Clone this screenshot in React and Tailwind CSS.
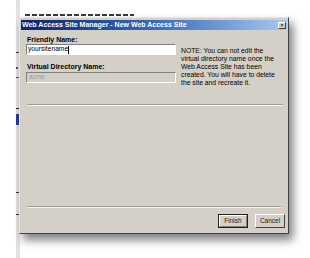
import React from 'react';

const sans = { fontFamily: '"Liberation Sans", Arial, sans-serif' };

function StripMarks() {
  // bits of the page behind the dialog, peeking out on the left
  return (
    <div className="flex flex-col w-[4px] h-full bg-[#e2e2e2]">
      <div className="h-[52px]" />
      <div className="h-[1px] w-[3px] bg-[#333]" />
      <div className="h-[14px]" />
      <div className="h-[2px] w-[2px] bg-[#555]" />
      <div className="h-[8px]" />
      <div className="h-[1px] w-[3px] bg-[#555]" />
      <div className="h-[30px]" />
      <div className="h-[1px] w-[3px] bg-[#222]" />
      <div className="h-[5px]" />
      <div className="h-[11px] w-[3px] bg-[#2a3c9c]" />
      <div className="h-[67px]" />
      <div className="h-[1px] w-[3px] bg-[#333]" />
      <div className="h-[21px]" />
      <div className="h-[1px] w-[3px] bg-[#333]" />
    </div>
  );
}

export default function App() {
  return (
    <div className="relative w-[310px] h-[258px] bg-white overflow-hidden" style={sans}>
      {/* page behind the dialog: bottom edge of a heading that the dialog hides */}
      <div className="absolute left-[25px] top-[14px] h-[2px] w-[109px] bg-[repeating-linear-gradient(90deg,#3a3a3a_0px,#3a3a3a_5px,transparent_5px,transparent_7px)]" />
      <div className="absolute left-[16px] top-0 h-[258px]">
        <StripMarks />
      </div>

      {/* dialog window */}
      <div className="absolute left-[19px] top-[17px] w-[270px] h-[217px] flex flex-col bg-[#d4d0c8] border border-t-[#e8e6e1] border-l-[#e8e6e1] border-r-[#404040] border-b-[#404040] pt-[2px] px-[1px] shadow-[4px_6px_9px_rgba(0,0,0,0.5)]">
        {/* title bar */}
        <div className="h-[10px] flex items-center justify-between pl-[1px] pr-[1px] bg-gradient-to-r from-[#0a246a] via-[#3a6ab8] to-[#a6caf0]">
          <span className="text-[7px] leading-[10px] font-bold text-white whitespace-nowrap">
            Web Access Site Manager - New Web Access Site
          </span>
          <span className="w-[8px] h-[7px] flex items-center justify-center bg-[#d4d0c8] border border-t-white border-l-white border-r-[#404040] border-b-[#404040] text-[6px] leading-none text-black">
            ×
          </span>
        </div>

        {/* body */}
        <div className="flex flex-col flex-1 px-[5px]">
          <div className="flex gap-[5px] pt-[5px]">
            <div className="flex flex-col w-[150px]">
              <div className="pl-[1px] text-[7px] leading-[9px] font-bold text-black">Friendly Name:</div>
              <div className="h-[11px] flex items-center bg-white border border-t-[#808080] border-l-[#808080] border-r-white border-b-white pl-[1px]">
                <span className="text-[6.7px] leading-none text-black">yoursitename</span>
                <span className="w-[1px] h-[8px] bg-black" />
              </div>
              <div className="mt-[7px] mb-[1px] pl-[1px] text-[7px] leading-[9px] font-bold text-black">
                Virtual Directory Name:
              </div>
              <div className="h-[11px] flex items-center bg-[#d4d0c8] border border-t-[#808080] border-l-[#808080] border-r-white border-b-white pl-[2px]">
                <span className="text-[6.5px] leading-none text-[#9a9a9a]">acme</span>
              </div>
            </div>
            <div className="pt-[12px] text-[6.8px] leading-[8px] text-black whitespace-nowrap">
              NOTE: You can not edit the<br />
              virtual directory name once the<br />
              Web Access Site has been<br />
              created. You will have to delete<br />
              the site and recreate it.
            </div>
          </div>

          <div className="mt-[17px] ml-[1px] -mr-[1px] border-t border-t-[#a09d96] border-b border-b-[#f4f3f0]" />

          <div className="flex-1" />

          <div className="ml-[1px] mr-[1px] border-t border-t-[#a09d96] border-b border-b-[#f4f3f0]" />

          <div className="flex justify-end gap-[7px] pt-[6px] pb-[5px] -mr-[3px]">
            <div className="w-[30px] h-[14px] border border-[#202020] flex">
              <div className="flex-1 flex items-center justify-center border border-t-white border-l-white border-r-[#808080] border-b-[#808080] text-[6.5px] leading-none text-[#202020]">
                Finish
              </div>
            </div>
            <div className="w-[30px] h-[14px] flex items-center justify-center border border-t-white border-l-white border-r-[#404040] border-b-[#404040] text-[6.5px] leading-none text-[#202020]">
              Cancel
            </div>
          </div>
        </div>
      </div>
    </div>
  );
}
